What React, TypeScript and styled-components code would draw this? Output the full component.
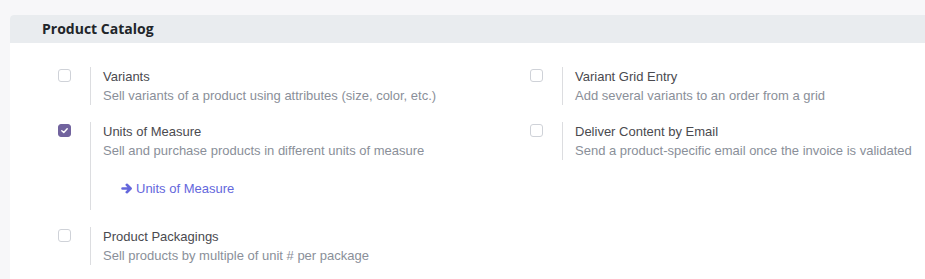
import React from "react";
import styled, { createGlobalStyle } from "styled-components";

const GlobalStyle = createGlobalStyle`
  body {
    margin: 0;
    background: #f7f7f9;
    font-family: "Liberation Sans", Arial, sans-serif;
  }
`;

const Page = styled.div`
  padding: 15px 0 0 10px;
  height: 264px;
`;

const Panel = styled.section`
  background: #ffffff;
  border-top-left-radius: 4px;
  height: 100%;
`;

const Header = styled.h2`
  margin: 0;
  height: 28px;
  line-height: 28px;
  padding-left: 32px;
  background: #e9ecef;
  border-top-left-radius: 4px;
  font-family: "Open Sans", "Noto Sans", sans-serif;
  font-weight: 700;
  font-size: 14px;
  color: #212529;
`;

const Grid = styled.div`
  display: grid;
  grid-template-columns: 472px 1fr;
  align-items: start;
  row-gap: 17px;
  padding: 24px 0 0 48px;
`;

const Box = styled.div`
  display: flex;
`;

const Left = styled.div`
  width: 32px;
  flex: none;
  padding-top: 2px;
`;

const Check = styled.span<{ $checked?: boolean }>`
  display: flex;
  align-items: center;
  justify-content: center;
  box-sizing: border-box;
  width: 13px;
  height: 13px;
  border-radius: 3px;
  border: 1px solid ${(p) => (p.$checked ? "#71639e" : "#cfd2d8")};
  background: ${(p) => (p.$checked ? "#71639e" : "#fff")};
`;

const Right = styled.div`
  border-left: 1px solid #dcdde0;
  padding-left: 12px;
  font-size: 13px;
  line-height: 19px;
`;

const Title = styled.div`
  color: #4a4a4f;
`;

const Desc = styled.div`
  color: #8a8f99;
`;

const Link = styled.a`
  display: flex;
  align-items: center;
  gap: 3px;
  margin: 19px 0 12px 18px;
  color: #6467dc;
  text-decoration: none;
`;

const CheckMark = () => (
  <svg width="9" height="9" viewBox="0 0 10 10">
    <path d="M2 5.2 L4.2 7.2 L8 3" fill="none" stroke="#fff" strokeWidth="1.6" strokeLinecap="round" strokeLinejoin="round" />
  </svg>
);

const Arrow = () => (
  <svg width="12" height="11" viewBox="0 0 12 11">
    <path
      d="M1.5 5.5 H9 M5.8 1.8 L9.6 5.5 L5.8 9.2"
      fill="none"
      stroke="#6467dc"
      strokeWidth="2.6"
      strokeLinecap="round"
      strokeLinejoin="round"
    />
  </svg>
);

interface SettingProps {
  title: string;
  desc: string;
  checked?: boolean;
  children?: React.ReactNode;
}

function Setting({ title, desc, checked, children }: SettingProps) {
  return (
    <Box>
      <Left>
        <Check $checked={checked}>{checked && <CheckMark />}</Check>
      </Left>
      <Right>
        <Title>{title}</Title>
        <Desc>{desc}</Desc>
        {children}
      </Right>
    </Box>
  );
}

export default function App() {
  return (
    <Page>
      <GlobalStyle />
      <Panel>
        <Header>Product Catalog</Header>
        <Grid>
          <Setting
            title="Variants"
            desc="Sell variants of a product using attributes (size, color, etc.)"
          />
          <Setting
            title="Variant Grid Entry"
            desc="Add several variants to an order from a grid"
          />
          <Setting
            checked
            title="Units of Measure"
            desc="Sell and purchase products in different units of measure"
          >
            <Link href="#">
              <Arrow />
              Units of Measure
            </Link>
          </Setting>
          <Setting
            title="Deliver Content by Email"
            desc="Send a product-specific email once the invoice is validated"
          />
          <Setting
            title="Product Packagings"
            desc="Sell products by multiple of unit # per package"
          />
        </Grid>
      </Panel>
    </Page>
  );
}
